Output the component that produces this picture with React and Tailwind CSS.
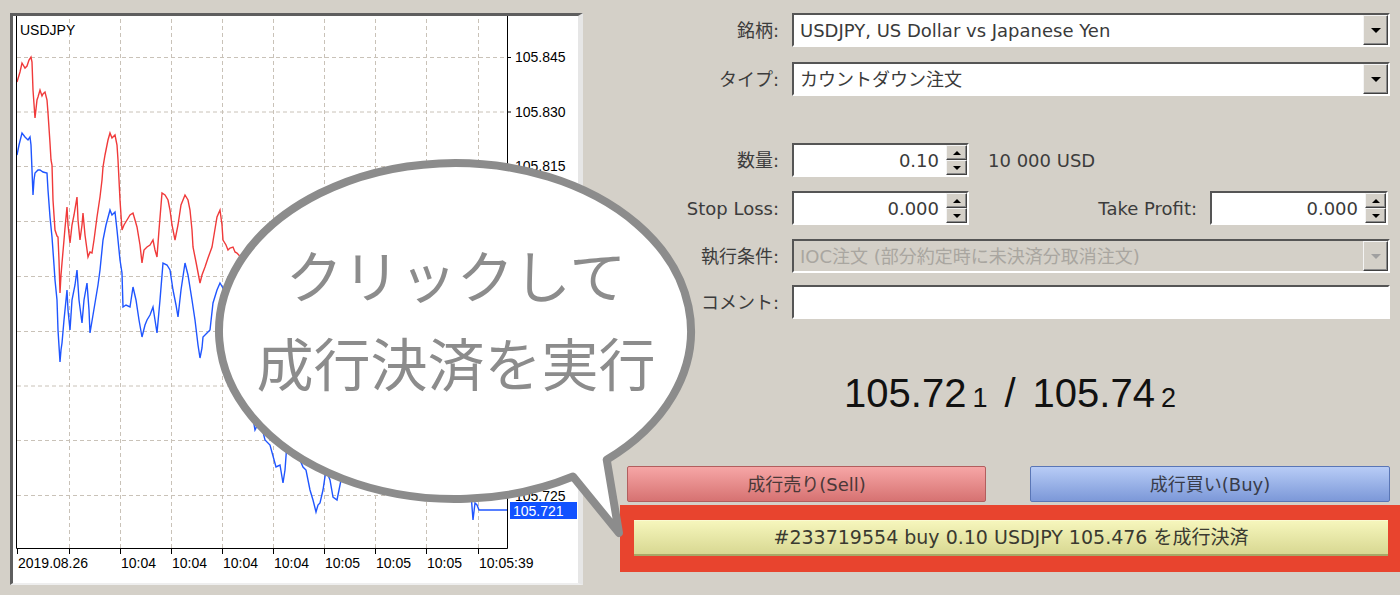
import React from "react";

const ui = "font-['DejaVu_Sans','Noto_Sans_CJK_JP',sans-serif]";

// bid / ask tick lines, in page pixels
const ASK = [
  [17, 82], [20, 72], [22, 63], [25, 68], [27, 66], [29, 60], [31, 57], [32, 62], [33, 90], [35, 118],
  [37, 100], [38, 97], [40, 90], [42, 96], [43, 94], [45, 92], [47, 100], [48, 113], [50, 143], [51, 160],
  [52, 165], [53, 200], [55, 230], [57, 236], [58, 237], [59, 260], [60, 293], [61, 275], [62, 263],
  [64, 240], [65, 228], [67, 207], [68, 225], [70, 243], [72, 225], [74, 215], [77, 197], [78, 220],
  [80, 240], [82, 225], [83, 213], [85, 235], [88, 257], [90, 252], [92, 253], [94, 240], [97, 217],
  [100, 197], [102, 180], [103, 167], [105, 155], [108, 140], [110, 133], [112, 138], [115, 135],
  [117, 145], [118, 160], [120, 200], [122, 230], [124, 225], [127, 220], [130, 215], [133, 213],
  [135, 220], [137, 227], [140, 245], [142, 263], [144, 250], [147, 247], [150, 245], [153, 240],
  [155, 250], [157, 257], [159, 230], [162, 193], [165, 195], [168, 200], [170, 210], [172, 225],
  [175, 240], [178, 225], [181, 205], [185, 195], [188, 200], [190, 210], [192, 230], [193, 247],
  [196, 262], [200, 283], [202, 275], [205, 267], [208, 258], [212, 247], [214, 235], [217, 217],
  [220, 210], [222, 225], [223, 240], [226, 245], [228, 250], [230, 248], [233, 247], [235, 252],
  [237, 253], [245, 262], [260, 255], [280, 272], [300, 300], [320, 320], [340, 330], [360, 300],
  [380, 320], [400, 350], [420, 380], [440, 400], [460, 420], [475, 440], [480, 433], [507, 433],
];

const BID = [
  [17, 155], [19, 145], [22, 133], [25, 137], [28, 140], [30, 137], [31, 145], [33, 195], [34, 180],
  [35, 173], [38, 170], [40, 170], [43, 172], [47, 173], [48, 190], [50, 217], [52, 237], [54, 265],
  [55, 280], [57, 300], [58, 330], [60, 362], [61, 350], [62, 343], [64, 320], [67, 290], [68, 310],
  [70, 330], [72, 300], [75, 285], [77, 270], [79, 300], [82, 323], [84, 300], [87, 283], [89, 310],
  [90, 333], [93, 315], [95, 303], [98, 285], [100, 270], [103, 240], [106, 225], [110, 210],
  [112, 215], [115, 212], [117, 230], [120, 260], [122, 273], [123, 307], [126, 305], [130, 307],
  [133, 287], [136, 300], [139, 320], [142, 337], [145, 325], [147, 320], [150, 315], [153, 307],
  [155, 320], [157, 333], [160, 300], [163, 263], [167, 265], [170, 270], [173, 290], [176, 305],
  [178, 317], [181, 290], [185, 263], [188, 275], [192, 300], [195, 320], [198, 345], [200, 358],
  [202, 348], [203, 337], [207, 333], [210, 330], [213, 303], [217, 290], [220, 283], [230, 300],
  [240, 330], [250, 400], [255, 430], [260, 420], [265, 440], [270, 445], [276, 467], [280, 465],
  [283, 483], [285, 470], [287, 443], [290, 450], [295, 455], [300, 460], [303, 467], [306, 470],
  [310, 490], [313, 500], [316, 512], [318, 505], [320, 503], [323, 490], [326, 470], [330, 480],
  [333, 497], [337, 500], [339, 490], [341, 480], [345, 470], [360, 440], [380, 420], [400, 430],
  [420, 450], [440, 455], [460, 470], [470, 480], [473, 520], [475, 503], [477, 505], [479, 510],
  [507, 510],
];

const pts = (arr) => arr.map(([x, y]) => `${x},${y}`).join(" ");

const GRID_X = [69, 120, 171, 222, 273, 324, 375, 426, 478];
const GRID_Y = [57, 111.5, 166, 221, 276, 331, 385.5, 440, 495];
// only the scale labels not hidden under the callout
const PRICES = [
  [57, "105.845"], [111.5, "105.830"], [166, "105.815"], [496, "105.725"],
];
const TIMES = [
  [18, "2019.08.26"], [121, "10:04"], [172, "10:04"], [223, "10:04"], [274, "10:04"],
  [325, "10:05"], [376, "10:05"], [427, "10:05"], [479, "10:05:39"],
];

function ChartPanel() {
  return (
    <div className="h-[572px] w-[573px] shrink-0 border-t-[3px] border-l-[3px] border-b-2 border-r-[5px] border-t-[#5e5e5e] border-l-[#5e5e5e] border-b-[#eeeeee] border-r-[#e6e6e6] bg-white">
      <svg width="565" height="567" viewBox="13 16 565 567" className="block font-['Liberation_Sans',sans-serif]">
        {GRID_X.map((x) => (
          <line key={x} x1={x + 0.5} y1="19" x2={x + 0.5} y2="548" stroke="#c9c2b8" strokeDasharray="4 3" />
        ))}
        {GRID_Y.map((y) => (
          <line key={y} x1="17" y1={y + 0.5} x2="507" y2={y + 0.5} stroke="#c9c2b8" strokeDasharray="4 3" />
        ))}
        <polyline points={pts(ASK)} fill="none" stroke="#f03a3a" strokeWidth="1.4" />
        <polyline points={pts(BID)} fill="none" stroke="#1f55ff" strokeWidth="1.4" />
        <path d="M16.5 16V548.5H507.5V16" fill="none" stroke="#000" strokeWidth="1" />
        {GRID_Y.map((y) => (
          <line key={y} x1="507" y1={y + 0.5} x2="511" y2={y + 0.5} stroke="#000" />
        ))}
        {PRICES.map(([y, p]) => (
          <text key={p} x="515" y={y + 5} fontSize="14" fill="#000">{p}</text>
        ))}
        {[17, 69, ...GRID_X.slice(1)].map((x) => (
          <line key={x} x1={x + 0.5} y1="548" x2={x + 0.5} y2="554" stroke="#000" />
        ))}
        {TIMES.map(([x, t]) => (
          <text key={x} x={x} y="568" fontSize="14" fill="#000">{t}</text>
        ))}
        <text x="20" y="35" fontSize="14" fill="#000">USDJPY</text>
        <rect x="510" y="502" width="67" height="17" fill="#1252ff" />
        <text x="513" y="515.5" fontSize="14" fill="#fff">105.721</text>
      </svg>
    </div>
  );
}

const sunken =
  "border-t-2 border-l-2 border-b-2 border-r-2 border-t-[#555] border-l-[#555] border-b-white border-r-white";
const raised =
  "border border-t-[#f4f4f4] border-l-[#f4f4f4] border-b-[#404040] border-r-[#404040] bg-[#d4d0c8] shadow-[inset_-1px_-1px_0_#8a8a8a]";

function Arrow({ dir = "down", color = "#000", w = 9, h = 5 }) {
  const d = dir === "down" ? `M0 0H${w}L${w / 2} ${h}Z` : `M${w / 2} 0L${w} ${h}H0Z`;
  return (
    <svg width={w} height={h} viewBox={`0 0 ${w} ${h}`}>
      <path d={d} fill={color} />
    </svg>
  );
}

function Select({ value, disabled }) {
  return (
    <div className={`flex h-[34px] w-[598px] ${sunken} ${disabled ? "bg-[#d4d0c8]" : "bg-white"}`}>
      <div className={`flex flex-1 items-center pl-[6px] text-[18px] ${disabled ? "text-[#a9a6a0]" : "text-[#3a3a3a]"}`}>
        {value}
      </div>
      <div className={`flex w-[25px] items-center justify-center ${raised}`}>
        <Arrow color={disabled ? "#a0a0a0" : "#000"} w={10} />
      </div>
    </div>
  );
}

function Spin({ value, width = "w-[177px]" }) {
  return (
    <div className={`flex h-[34px] ${width} ${sunken} bg-white`}>
      <div className="flex flex-1 items-center justify-end pr-[7px] text-[18px] text-[#3a3a3a]">{value}</div>
      <div className="flex w-[21px] flex-col">
        <div className={`flex flex-1 items-center justify-center ${raised}`}>
          <Arrow dir="up" w={8} h={4} />
        </div>
        <div className={`flex flex-1 items-center justify-center ${raised}`}>
          <Arrow w={8} h={4} />
        </div>
      </div>
    </div>
  );
}

function Row({ label, className = "", children }) {
  return (
    <div className={`flex items-center ${className}`}>
      <span className="w-[196px] text-right text-[18px] text-[#3c3c3c]">{label}</span>
      <div className="ml-[13px] flex items-center">{children}</div>
    </div>
  );
}

function Bubble() {
  return (
    <>
      <svg className="pointer-events-none absolute left-0 top-0" width="1400" height="595">
        <path
          d="M606.7 459.7A236 168 0 1 0 573 476.5L619 533Z"
          fill="#fff"
          stroke="#8c8c8c"
          strokeWidth="8"
          strokeLinejoin="round"
        />
      </svg>
      <div className="pointer-events-none absolute left-[218px] top-[229px] w-[476px] text-center font-['Noto_Sans_CJK_JP',sans-serif] text-[57px] leading-[88px] text-[#8c8c8c]">
        <div>クリックして</div>
        <div>成行決済を実行</div>
      </div>
    </>
  );
}

export default function App() {
  return (
    <div className={`relative h-[595px] w-[1400px] overflow-hidden bg-[#d4d0c8] ${ui}`}>
      <div className="flex pl-[10px] pt-[13px]">
        <ChartPanel />
        <div className="w-[817px] shrink-0">
          <Row label="銘柄:">
            <Select value="USDJPY, US Dollar vs Japanese Yen" />
          </Row>
          <Row label="タイプ:" className="mt-[15px]">
            <Select value="カウントダウン注文" />
          </Row>
          <Row label="数量:" className="mt-[47px]">
            <Spin value="0.10" />
            <span className="ml-[19px] text-[18px] text-[#3c3c3c]">10 000 USD</span>
          </Row>
          <Row label="Stop Loss:" className="mt-[14px]">
            <Spin value="0.000" />
            <span className="w-[228px] text-right text-[18px] text-[#3c3c3c]">Take Profit:</span>
            <div className="ml-[13px]">
              <Spin value="0.000" width="w-[178px]" />
            </div>
          </Row>
          <Row label="執行条件:" className="mt-[14px]">
            <Select value="IOC注文 (部分約定時に未決済分取消注文)" disabled />
          </Row>
          <Row label="コメント:" className="mt-[12px]">
            <div className={`h-[34px] w-[598px] bg-white ${sunken}`} />
          </Row>

          <div className="pl-[37px]">
            <div className="flex h-[147px] items-center justify-center font-['Liberation_Sans',sans-serif] text-[#111]">
              <div className="flex items-baseline leading-none">
                <span className="text-[40px]">105.72</span>
                <span className="ml-[6px] text-[27px]">1</span>
                <span className="mx-[17px] text-[40px]">/</span>
                <span className="text-[40px]">105.74</span>
                <span className="ml-[6px] text-[27px]">2</span>
              </div>
            </div>
            <div className="flex h-[36px] pl-[7px]">
              <button className="w-[359px] rounded-[2px] border border-[#b25e5e] bg-linear-to-b from-[#f6a6a6] to-[#d67272] text-[18px] text-[#4a3838]">
                成行売り(Sell)
              </button>
              <button className="ml-[44px] w-[360px] rounded-[2px] border border-[#5a76b6] bg-linear-to-b from-[#b8ccf6] to-[#7c98d8] text-[18px] text-[#383c4a]">
                成行買い(Buy)
              </button>
            </div>
            <div className="mt-[3px] h-[67px] bg-[#e8442e] pl-[14px] pr-[12px] pt-[15px]">
              <button className="h-[36px] w-full border-b-2 border-t border-b-[#a8a866] border-t-[#fafad0] bg-linear-to-b from-[#f6f6bc] to-[#d8d892] text-[19px] text-[#3a3a30]">
                #233719554 buy 0.10 USDJPY 105.476 を成行決済
              </button>
            </div>
          </div>
        </div>
      </div>
      <Bubble />
    </div>
  );
}
